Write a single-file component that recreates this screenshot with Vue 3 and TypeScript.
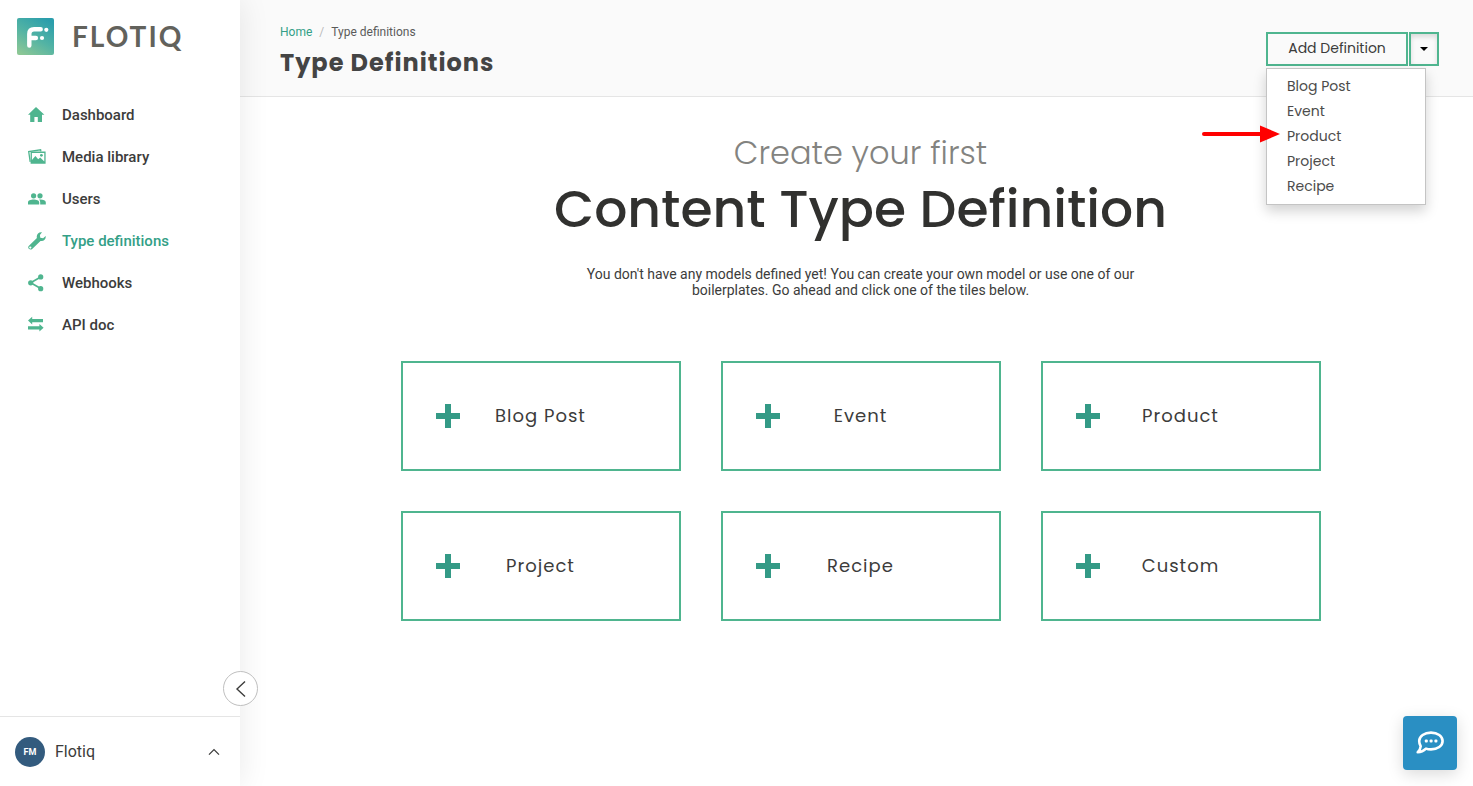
<script setup lang="ts">
import { ref } from 'vue'

interface NavItem {
  label: string
  icon: string
  active?: boolean
}

const navItems: NavItem[] = [
  { label: 'Dashboard', icon: 'home' },
  { label: 'Media library', icon: 'media' },
  { label: 'Users', icon: 'users' },
  { label: 'Type definitions', icon: 'wrench', active: true },
  { label: 'Webhooks', icon: 'share' },
  { label: 'API doc', icon: 'arrows' },
]

const boilerplates: string[] = ['Blog Post', 'Event', 'Product', 'Project', 'Recipe']
const tiles: string[] = [...boilerplates, 'Custom']
const menuOpen = ref<boolean>(true)
</script>

<template>
  <div class="layout">
    <aside class="sidebar">
      <a class="brand" href="#" aria-label="Flotiq">
        <svg class="brand-mark" viewBox="0 0 37 37" aria-hidden="true">
          <defs>
            <linearGradient id="brandFill" x1="0.15" y1="1" x2="0.75" y2="0">
              <stop offset="0" stop-color="#8cc795" />
              <stop offset="0.5" stop-color="#52b3a4" />
              <stop offset="1" stop-color="#2b9eac" />
            </linearGradient>
          </defs>
          <rect width="37" height="37" rx="2" fill="url(#brandFill)" />
          <path d="M12.3 27.5V16q0-4.800 4.800-4.800h6.600M12.300 20h6.600" fill="none" stroke="#fff" stroke-width="4.4" stroke-linecap="round" />
          <circle cx="29.3" cy="11.8" r="2.1" fill="#fff" />
          <circle cx="25" cy="20" r="2.1" fill="#fff" />
        </svg>
        <span class="brand-name">FLOTIQ</span>
      </a>

      <nav class="nav">
        <a v-for="item in navItems" :key="item.label" href="#" class="nav-link" :class="{ active: item.active }">
          <svg class="nav-icon" viewBox="0 0 18 18" aria-hidden="true">
            <path v-if="item.icon === 'home'" d="M8 1 16.4 8.800H14V16H9.800v-5H6.400v5H2.200V8.800H0z" />
            <g v-else-if="item.icon === 'media'">
              <path d="M2.2 13.8 .7 3.5 12.6 1.8l.3 1.6" fill="none" stroke="currentColor" stroke-width="1.3" />
              <path fill-rule="evenodd" d="M2.6 3.6H17.6V15.8H2.6zM3.9 4.900V12l3.500-4 2.800 3.300 2-1.900 4.100 4.200V4.900z" />
              <circle cx="13.4" cy="7.3" r="1.4" />
            </g>
            <g v-else-if="item.icon === 'users'">
              <circle cx="5.6" cy="5.8" r="2.6" />
              <circle cx="12" cy="5.8" r="2.6" />
              <path d="M0 14.4v-2.200c0-3.700 11.200-3.700 11.200 0v2.200zM12.200 14.400v-2.200c0-1.100-.4-1.900-1.100-2.600 3-.4 6.700.5 6.700 2.600v2.200z" />
            </g>
            <path v-else-if="item.icon === 'wrench'" fill-rule="evenodd" d="M14 .3 11.9 3l.4 2.700 2.800.5 2.600-2.100c.4 3.100-2 5.600-5.200 4.900L4.200 17c-2.200 1.800-5.200-.8-3.500-3.100L8.900 6C8 2.900 10.600-.2 14 .3zM2.300 14.400a1 1 0 1 0 .01 0z" />
            <g v-else-if="item.icon === 'share'">
              <path d="M12.7 3.1 2.7 8.800l10 5.800" fill="none" stroke="currentColor" stroke-width="1.7" />
              <circle cx="12.7" cy="2.9" r="2.6" />
              <circle cx="2.7" cy="8.800" r="2.6" />
              <circle cx="12.7" cy="14.7" r="2.6" />
            </g>
            <path v-else d="M0 4.600 4.200.8v2.200H15v3.200H4.200v2.200zM15.600 11.800 11.400 15.600v-2.200H0v-3.200h11.400V8z" />
          </svg>
          <span>{{ item.label }}</span>
        </a>
      </nav>

      <button type="button" class="collapse" aria-label="Collapse sidebar">
        <svg viewBox="0 0 18 18" aria-hidden="true">
          <path d="M13 1.500 5 9l8 7.500" fill="none" stroke="currentColor" stroke-width="1.4" />
        </svg>
      </button>

      <button type="button" class="account">
        <span class="avatar">FM</span>
        <span class="account-name">Flotiq</span>
        <svg class="account-chevron" viewBox="0 0 12 8" aria-hidden="true">
          <path d="M1 6.600 6 1.600l5 5" fill="none" stroke="currentColor" stroke-width="1.3" />
        </svg>
      </button>
    </aside>

    <div class="page">
      <header class="topbar">
        <div>
          <nav class="crumbs" aria-label="Breadcrumb">
            <a href="#">Home</a>
            <span class="crumb-sep">/</span>
            <span>Type definitions</span>
          </nav>
          <h1>Type Definitions</h1>
        </div>

        <div class="actions">
          <button type="button" class="btn btn-add">Add Definition</button>
          <button
            type="button"
            class="btn btn-caret"
            aria-label="Choose a boilerplate"
            :aria-expanded="menuOpen"
            @click="menuOpen = !menuOpen"
          >
            <svg viewBox="0 0 8 4" aria-hidden="true"><path d="M0 0h8L4 4z" /></svg>
          </button>
          <ul v-if="menuOpen" class="menu">
            <li v-for="name in boilerplates" :key="name"><a href="#">{{ name }}</a></li>
          </ul>
          <svg class="pointer" viewBox="0 0 78 18" aria-hidden="true">
            <path d="M2 9h58" stroke="#f00" stroke-width="4" stroke-linecap="round" />
            <path d="M58 .5 78 9 58 17.500z" fill="#f00" />
          </svg>
        </div>
      </header>

      <main class="content">
        <h2>
          <span class="lead">Create your first</span>
          <span class="headline">Content Type Definition</span>
        </h2>
        <p class="intro">
          You don't have any models defined yet! You can create your own model or use one of our
          boilerplates. Go ahead and click one of the tiles below.
        </p>
        <div class="tiles">
          <button v-for="name in tiles" :key="name" type="button" class="tile">
            <svg viewBox="0 0 24 24" aria-hidden="true"><path d="M9 0h6v9h9v6h-9v9H9v-9H0V9h9z" /></svg>
            <span>{{ name }}</span>
          </button>
        </div>
      </main>
    </div>

    <button type="button" class="chat" aria-label="Open chat">
      <svg viewBox="0 0 28 24" aria-hidden="true">
        <path
          d="M15 1.600c6.600 0 11.600 3.600 11.600 8.400s-5 8.400-11.600 8.400c-1.900 0-3.500-.2-5-.8-2 2-4.700 3.600-8.300 3.600 1.600-1.300 2.800-3.200 3-6-1-1.500-1.500-3.300-1.500-5.200C3.200 5.200 8.400 1.600 15 1.600z"
          fill="none"
          stroke="#fff"
          stroke-width="2.6"
          stroke-linejoin="round"
        />
        <rect x="8.800" y="8.500" width="3" height="3" rx="1" fill="#fff" />
        <rect x="13.600" y="8.500" width="3" height="3" rx="1" fill="#fff" />
        <rect x="18.400" y="8.500" width="3" height="3" rx="1" fill="#fff" />
      </svg>
    </button>
  </div>
</template>

<style>
body {
  margin: 0;
  background: #fff;
}
</style>

<style scoped>
* {
  box-sizing: border-box;
}

button {
  cursor: pointer;
  margin: 0;
  padding: 0;
  border: 0;
  background: none;
  font-family: inherit;
  color: inherit;
}

a {
  color: inherit;
  text-decoration: none;
}

.layout {
  display: flex;
  min-height: 100vh;
  font-family: Roboto, sans-serif;
  color: #3c3c3b;
}

.sidebar {
  position: relative;
  z-index: 1;
  display: flex;
  flex: none;
  flex-direction: column;
  width: 240px;
  background: #fff;
  box-shadow: 0 0 30px rgba(0, 0, 0, 0.09);
}

.brand {
  display: flex;
  align-items: flex-start;
  gap: 18px;
  padding: 18px 17px 0;
}

.brand-mark {
  width: 37px;
  height: 37px;
}

.brand-name {
  font-family: Lato, sans-serif;
  font-size: 28px;
  font-weight: 700;
  line-height: 36px;
  letter-spacing: 2px;
  color: #62625c;
}

.nav {
  display: flex;
  flex: 1;
  flex-direction: column;
  padding-top: 39px;
}

.nav-link {
  display: flex;
  align-items: center;
  gap: 16px;
  height: 42px;
  padding-left: 28px;
  font-size: 15px;
  font-weight: 500;
}

.nav-link.active {
  color: #349f87;
}

.nav-icon {
  width: 18px;
  height: 18px;
  color: #4fb58f;
  fill: currentColor;
}

.collapse {
  position: absolute;
  right: -18px;
  bottom: 80px;
  display: flex;
  align-items: center;
  justify-content: center;
  width: 35px;
  height: 35px;
  border: 1px solid #bfbfbf;
  border-radius: 50%;
  background: #fff;
}

.collapse svg {
  width: 18px;
  height: 18px;
}

.account {
  display: flex;
  align-items: center;
  gap: 10px;
  height: 70px;
  padding: 0 20px 0 15px;
  border-top: 1px solid #e5e5e5;
}

.avatar {
  width: 30px;
  border-radius: 50%;
  background: #335b7e;
  color: #fff;
  font-size: 9px;
  font-weight: 700;
  line-height: 30px;
  text-align: center;
}

.account-name {
  flex: 1;
  font-size: 16px;
  text-align: left;
}

.account-chevron {
  width: 12px;
  height: 8px;
}

.page {
  flex: 1;
  min-width: 0;
}

.topbar {
  display: flex;
  justify-content: space-between;
  align-items: flex-start;
  height: 97px;
  padding: 24px 34px 0 40px;
  border-bottom: 1px solid #e5e5e5;
  background: #fafafa;
}

.crumbs {
  display: flex;
  gap: 7px;
  font-size: 12px;
  line-height: 16px;
  color: #5a5a5a;
}

.crumbs a {
  color: #349f87;
}

.crumb-sep {
  color: #bbb;
}

h1 {
  margin: 7px 0 0;
  font-family: Poppins, Inter, sans-serif;
  font-size: 24px;
  font-weight: 700;
  line-height: 32px;
  letter-spacing: 1px;
  color: #444;
}

.actions {
  position: relative;
  display: flex;
  gap: 1px;
  padding-top: 8px;
  font-family: Poppins, Inter, sans-serif;
}

.btn {
  height: 34px;
  border: 2px solid #4fb58f;
  font-size: 14px;
}

.btn-add {
  width: 142px;
  padding-bottom: 2px;
}

.btn-caret {
  display: flex;
  align-items: center;
  justify-content: center;
  width: 30px;
  box-shadow: inset 0 3px 5px rgba(0, 0, 0, 0.13);
}

.btn-caret svg {
  width: 8px;
  height: 4px;
}

.menu {
  position: absolute;
  top: 44px;
  left: 0;
  width: 160px;
  margin: 0;
  padding: 5px 0;
  border: 1px solid #c4c4c4;
  background: #fff;
  box-shadow: 0 6px 12px rgba(0, 0, 0, 0.18);
  list-style: none;
}

.menu a {
  display: block;
  padding: 0 20px;
  font-size: 14px;
  line-height: 25px;
  color: #4c4c4b;
}

.pointer {
  position: absolute;
  top: 101px;
  left: -64px;
  width: 78px;
  height: 18px;
}

.content {
  padding: 32px 32px 40px 40px;
  text-align: center;
}

h2 {
  margin: 0;
  font-family: Poppins, Inter, sans-serif;
}

.lead,
.headline {
  display: block;
}

.lead {
  font-size: 32px;
  font-weight: 300;
  line-height: 48px;
  color: #838380;
}

.headline {
  font-size: 52px;
  font-weight: 500;
  line-height: 64px;
  color: #31312f;
}

.intro {
  max-width: 560px;
  margin: 25px auto 0;
  font-size: 14px;
  line-height: 16px;
}

.tiles {
  display: grid;
  grid-template-columns: repeat(auto-fit, 280px);
  justify-content: center;
  gap: 40px;
  max-width: 920px;
  margin: 63px auto 0;
}

.tile {
  display: grid;
  grid-template-columns: 24px 1fr 24px;
  align-items: center;
  height: 110px;
  padding: 0 33px;
  border: 2px solid #4fb58f;
  font-family: Poppins, Inter, sans-serif;
  font-size: 18px;
  letter-spacing: 1px;
}

.tile span {
  padding-bottom: 2px;
}

.tile svg {
  width: 24px;
  height: 24px;
  fill: #349a86;
}

.chat {
  position: fixed;
  right: 16px;
  bottom: 16px;
  display: flex;
  align-items: center;
  justify-content: center;
  width: 54px;
  height: 54px;
  border-radius: 4px;
  background: #2a8fc3;
  box-shadow: 0 4px 16px rgba(0, 0, 0, 0.15);
}

.chat svg {
  width: 28px;
  height: 24px;
}
</style>
